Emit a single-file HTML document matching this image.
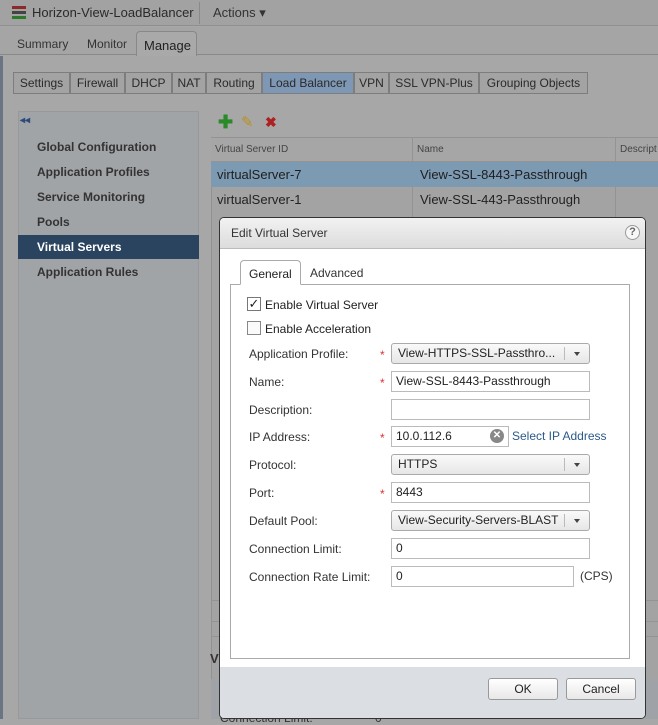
<!DOCTYPE html>
<html style="background:#a7a7a7"><head><style>
*{box-sizing:border-box;margin:0;padding:0}
html,body{background:#a7a7a7}
body{width:658px;height:719px;overflow:hidden;font-family:"Liberation Sans",Arial,sans-serif;font-size:12px;color:#222;position:relative}
.a{position:absolute}
.t{position:absolute;white-space:nowrap}
.tab{position:absolute;top:72px;height:22px;border:1px solid #7d7d7d;background:#a3a3a3;color:#2a2a2a;font-size:12px;line-height:20px;text-align:center}
.nav{position:absolute;left:37px;font-weight:bold;color:#333;font-size:12px}
.lbl{position:absolute;left:249px;color:#333;font-size:12px}
.req{position:absolute;left:380px;color:#d33;font-size:12px}
.in{position:absolute;left:391px;width:199px;height:21px;border:1px solid #bbb;background:#fff;font-size:12px;line-height:19px;padding-left:4px;color:#222}
.sel{position:absolute;left:391px;width:199px;height:21px;border:1px solid #aaa;border-radius:3px;background:linear-gradient(#fafafa,#e6e6e6);font-size:12px;line-height:19px;padding-left:6px;color:#222}
.sel:after{content:"";position:absolute;right:0;top:3px;width:24px;height:13px;border-left:1px solid #bbb}
.sel i{position:absolute;right:9px;top:8px;border-left:3px solid transparent;border-right:3px solid transparent;border-top:4px solid #444}
.btn{position:absolute;top:678px;height:22px;border:1px solid #999;border-radius:3px;background:linear-gradient(#fff,#e8e8e8);text-align:center;line-height:20px;font-size:12px}
</style></head><body>
<div class="a" style="left:0;top:0;width:658px;height:26px;background:#a2a2a2;border-bottom:1px solid #8f8f8f"></div>
<div class="a" style="left:12px;top:6px;width:14px;height:3px;background:#8a2a2a"></div>
<div class="a" style="left:12px;top:11px;width:14px;height:3px;background:#444"></div>
<div class="a" style="left:12px;top:16px;width:14px;height:3px;background:#2a7a2a"></div>
<div class="t" style="left:32px;top:5px;font-size:13px;color:#2a2a2a">Horizon-View-LoadBalancer</div>
<div class="a" style="left:199px;top:2px;width:1px;height:22px;background:#8a8a8a"></div>
<div class="t" style="left:213px;top:5px;font-size:13px;color:#333">Actions ▾</div>
<div class="a" style="left:0;top:27px;width:658px;height:28px;background:#a5a5a5;border-bottom:1px solid #888"></div>
<div class="t" style="left:17px;top:37px;color:#333">Summary</div>
<div class="t" style="left:87px;top:37px;color:#333">Monitor</div>
<div class="a" style="left:136px;top:31px;width:61px;height:25px;background:#a9a9a9;border:1px solid #888;border-bottom:none;border-radius:4px 4px 0 0"></div>
<div class="t" style="left:144px;top:38px;color:#222;font-size:13px">Manage</div>
<div class="a" style="left:0;top:56px;width:3px;height:663px;background:#6b7483"></div>
<div class="tab" style="left:13px;width:57px">Settings</div>
<div class="tab" style="left:70px;width:55px">Firewall</div>
<div class="tab" style="left:125px;width:47px">DHCP</div>
<div class="tab" style="left:172px;width:34px">NAT</div>
<div class="tab" style="left:206px;width:56px">Routing</div>
<div class="tab" style="left:262px;width:92px;background:#7d97b4">Load Balancer</div>
<div class="tab" style="left:354px;width:35px">VPN</div>
<div class="tab" style="left:389px;width:90px">SSL VPN-Plus</div>
<div class="tab" style="left:479px;width:109px">Grouping Objects</div>
<div class="a" style="left:18px;top:111px;width:181px;height:608px;background:#a1a4a7;border:1px solid #979a9d"></div>
<div class="t" style="left:20px;top:115px;color:#2d4a78;font-size:10px;font-weight:bold">◂◂</div>
<div class="nav" style="top:140px">Global Configuration</div>
<div class="nav" style="top:165px">Application Profiles</div>
<div class="nav" style="top:190px">Service Monitoring</div>
<div class="nav" style="top:215px">Pools</div>
<div class="a" style="left:18px;top:235px;width:181px;height:24px;background:#2a4460"></div>
<div class="nav" style="top:240px;color:#fff">Virtual Servers</div>
<div class="nav" style="top:265px">Application Rules</div>
<div class="t" style="left:218px;top:112px;color:#2a8a2a;font-size:18px;font-weight:bold">✚</div>
<div class="t" style="left:241px;top:113px;color:#b89020;font-size:15px">✎</div>
<div class="t" style="left:265px;top:114px;color:#b02020;font-size:14px;font-weight:bold">✖</div>
<div class="a" style="left:211px;top:137px;width:447px;height:582px;background:#a3a3a3;border-left:1px solid #919191"></div>
<div class="a" style="left:211px;top:137px;width:447px;height:25px;background:#a6a6a6;border-bottom:1px solid #939393;border-top:1px solid #939393"></div>
<div class="t" style="left:215px;top:144px;font-size:10px;color:#444">Virtual Server ID</div>
<div class="t" style="left:417px;top:144px;font-size:10px;color:#444">Name</div>
<div class="t" style="left:620px;top:144px;font-size:10px;color:#444">Descript</div>
<div class="a" style="left:412px;top:137px;width:1px;height:80px;background:#939393"></div>
<div class="a" style="left:615px;top:137px;width:1px;height:80px;background:#939393"></div>
<div class="a" style="left:211px;top:162px;width:447px;height:25px;background:#7d9ab3"></div>
<div class="t" style="left:217px;top:167px;font-size:13px;color:#1e1e1e">virtualServer-7</div>
<div class="t" style="left:420px;top:167px;font-size:13px;color:#1e1e1e">View-SSL-8443-Passthrough</div>
<div class="t" style="left:217px;top:192px;font-size:13px;color:#222">virtualServer-1</div>
<div class="t" style="left:420px;top:192px;font-size:13px;color:#222">View-SSL-443-Passthrough</div>
<div class="a" style="left:211px;top:600px;width:447px;height:22px;border-top:1px solid #939393;border-bottom:1px solid #939393"></div>
<div class="a" style="left:211px;top:636px;width:447px;height:1px;background:#939393"></div>
<div class="t" style="left:210px;top:651px;font-weight:bold;color:#333;font-size:13px">V</div>
<div class="a" style="left:211px;top:679px;width:447px;height:40px;background:#9fa3a8"></div>
<div class="t" style="left:220px;top:711px;color:#333">Connection Limit:</div>
<div class="t" style="left:375px;top:711px;color:#333">0</div>
<div class="a" style="left:219px;top:217px;width:427px;height:502px;border:1px solid #333;border-radius:5px;background:#fff;overflow:hidden">
 <div class="a" style="left:0;top:0;width:425px;height:31px;background:linear-gradient(#f2f2f2,#dcdcdc);border-bottom:1px solid #bbb"></div>
 <div class="t" style="left:11px;top:8px;font-size:12px;color:#333">Edit Virtual Server</div>
 <div class="a" style="left:405px;top:7px;width:15px;height:15px;border:1px solid #999;border-radius:50%;background:#f8f8f8;font-size:11px;line-height:13px;text-align:center;color:#666;font-weight:bold">?</div>
 <div class="a" style="left:0;top:449px;width:425px;height:54px;background:#dbdfe4"></div>
</div>
<div class="a" style="left:230px;top:284px;width:400px;height:375px;border:1px solid #aaa"></div>
<div class="a" style="left:240px;top:260px;width:61px;height:25px;border:1px solid #aaa;border-bottom:1px solid #fff;border-radius:4px 4px 0 0;background:#fff"></div>
<div class="t" style="left:249px;top:267px;color:#222">General</div>
<div class="t" style="left:310px;top:266px;color:#333">Advanced</div>
<div class="a" style="left:247px;top:297px;width:14px;height:14px;border:1px solid #777;background:#fff;font-size:13px;line-height:12px;text-align:center;color:#222">✓</div>
<div class="t" style="left:265px;top:298px;color:#222">Enable Virtual Server</div>
<div class="a" style="left:247px;top:321px;width:14px;height:14px;border:1px solid #888;background:#fafafa"></div>
<div class="t" style="left:265px;top:322px;color:#222">Enable Acceleration</div>
<div class="lbl" style="top:347px">Application Profile:</div><div class="req" style="top:348px">*</div>
<div class="sel" style="top:343px">View-HTTPS-SSL-Passthro...<i></i></div>
<div class="lbl" style="top:375px">Name:</div><div class="req" style="top:376px">*</div>
<div class="in" style="top:371px">View-SSL-8443-Passthrough</div>
<div class="lbl" style="top:403px">Description:</div>
<div class="in" style="top:399px"></div>
<div class="lbl" style="top:430px">IP Address:</div><div class="req" style="top:431px">*</div>
<div class="in" style="top:426px;width:118px">10.0.112.6</div>
<div class="a" style="left:490px;top:429px;width:14px;height:14px;border-radius:50%;background:#888;color:#fff;font-size:10px;line-height:14px;text-align:center;font-weight:bold">✕</div>
<div class="t" style="left:512px;top:429px;color:#2a5a8a">Select IP Address</div>
<div class="lbl" style="top:458px">Protocol:</div>
<div class="sel" style="top:454px">HTTPS<i></i></div>
<div class="lbl" style="top:486px">Port:</div><div class="req" style="top:487px">*</div>
<div class="in" style="top:482px">8443</div>
<div class="lbl" style="top:514px">Default Pool:</div>
<div class="sel" style="top:510px">View-Security-Servers-BLAST<i></i></div>
<div class="lbl" style="top:542px">Connection Limit:</div>
<div class="in" style="top:538px">0</div>
<div class="lbl" style="top:570px">Connection Rate Limit:</div>
<div class="in" style="top:566px;width:183px">0</div>
<div class="t" style="left:580px;top:569px;color:#333">(CPS)</div>
<div class="btn" style="left:488px;width:70px">OK</div>
<div class="btn" style="left:566px;width:70px">Cancel</div>
</body></html>
